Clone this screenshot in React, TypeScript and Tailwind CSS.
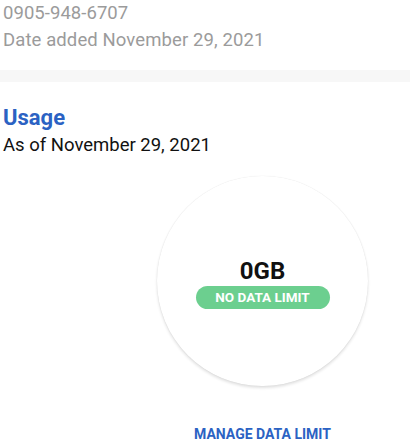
export default function App() {
  return (
    <div className="w-[410px] h-[448px] overflow-hidden bg-white font-['Roboto',sans-serif]">
      <div className="px-[3px]">
        <p className="text-[18.5px] leading-[27px] tracking-[0.05px] text-[#9b9b9b]">0905-948-6707</p>
        <p className="text-[18.5px] leading-[27px] tracking-[0.1px] text-[#9b9b9b]">Date added November 29, 2021</p>
      </div>
      <div className="mt-[16px] h-[12px] bg-[#f7f7f7]" />
      <div className="px-[3px] mt-[22px]">
        <h2 className="text-[22px] leading-[28px] font-bold text-[#2b62c3]">Usage</h2>
        <p className="text-[18.5px] leading-[27px] text-[#111111]">As of November 29, 2021</p>
      </div>
      <div className="ml-[157px] w-[211px]">
        <div className="mt-[17px] w-[211px] h-[210px] rounded-full bg-white shadow-[0_2px_3px_rgba(0,0,0,0.12),0_0_1px_rgba(0,0,0,0.12)] flex flex-col items-center pt-[81px]">
          <div className="text-[24px] leading-[28px] font-bold text-[#111111]">0GB</div>
          <div className="mt-[1px] w-[134px] h-[23px] rounded-full bg-[#6ccf8f] flex items-center justify-center text-[13.5px] font-bold text-white">
            NO DATA LIMIT
          </div>
        </div>
        <div className="mt-[38px] text-center text-[14px] leading-[20px] font-bold text-[#2b62c3]">
          MANAGE DATA LIMIT
        </div>
      </div>
    </div>
  );
}
